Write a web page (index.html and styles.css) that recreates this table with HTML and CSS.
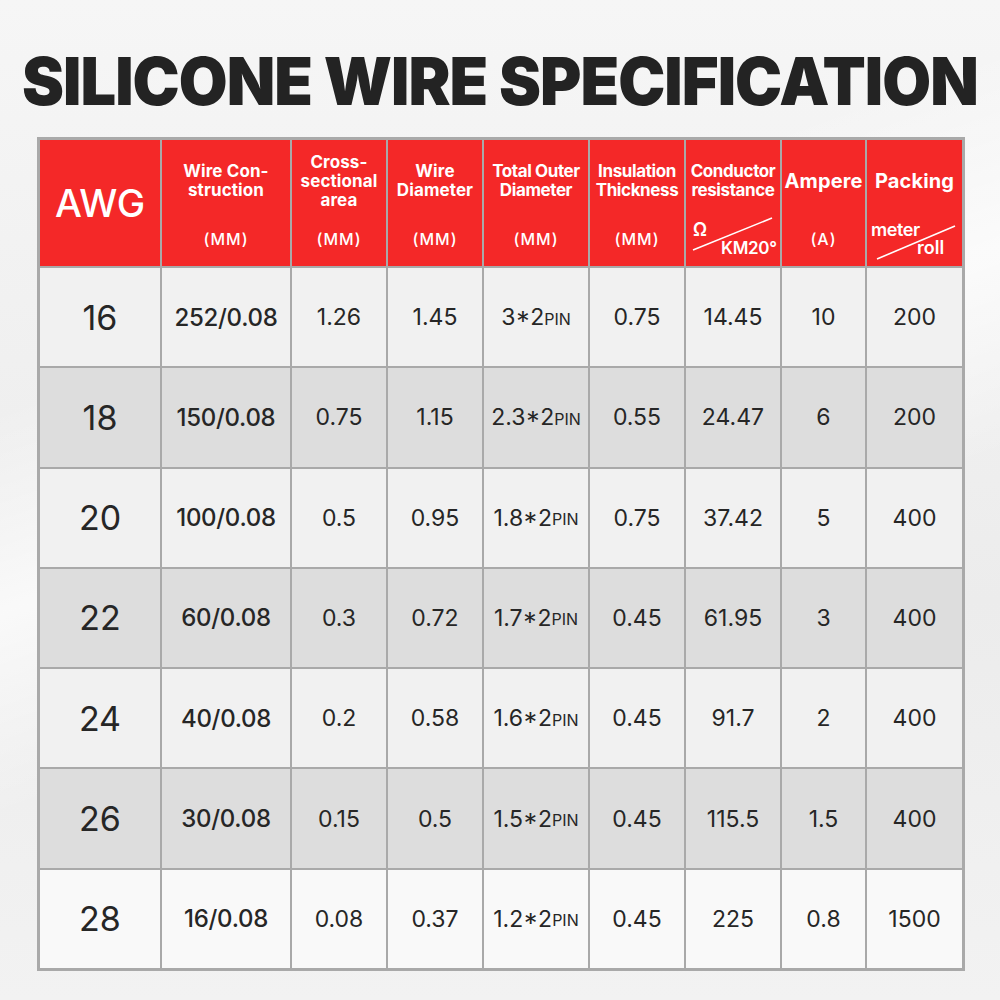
FILE: index.html
```html
<!DOCTYPE html>
<html>
<head>
<meta charset="utf-8">
<link rel="stylesheet" href="styles.css">
</head>
<body>
<div class="page">
  <h1 class="title"><span class="title-text">SILICONE WIRE SPECIFICATION</span></h1>
  <div class="table">
    <div class="row head">
      <div class="hc awg">AWG</div>
      <div class="hc"><div class="ht">Wire Con-<br>struction</div><div class="hu">(MM)</div></div>
      <div class="hc"><div class="ht">Cross-<br>sectional<br>area</div><div class="hu">(MM)</div></div>
      <div class="hc"><div class="ht">Wire<br>Diameter</div><div class="hu">(MM)</div></div>
      <div class="hc"><div class="ht tight">Total Outer<br>Diameter</div><div class="hu">(MM)</div></div>
      <div class="hc"><div class="ht tight">Insulation<br>Thickness</div><div class="hu">(MM)</div></div>
      <div class="hc frac-cell"><div class="ht tight">Conductor<br>resistance</div>
        <svg class="slash" width="94" height="126"><line x1="7" y1="110" x2="86" y2="78" stroke="#fff" stroke-width="1.6"/></svg>
        <span class="fr ohm">Ω</span><span class="fr km">KM20°</span>
      </div>
      <div class="hc"><div class="ht big">Ampere</div><div class="hu">(A)</div></div>
      <div class="hc frac-cell"><div class="ht big">Packing</div>
        <svg class="slash" width="95" height="126"><line x1="10" y1="119" x2="88" y2="86" stroke="#fff" stroke-width="1.6"/></svg>
        <span class="fr meter">meter</span><span class="fr roll">roll</span>
      </div>
    </div>

    <div class="row">
      <div class="c awgv">16</div><div class="c cons">252/0.08</div><div class="c">1.26</div><div class="c">1.45</div><div class="c">3*2<small>PIN</small></div><div class="c">0.75</div><div class="c">14.45</div><div class="c">10</div><div class="c">200</div>
    </div>
    <div class="row alt">
      <div class="c awgv">18</div><div class="c cons">150/0.08</div><div class="c">0.75</div><div class="c">1.15</div><div class="c">2.3*2<small>PIN</small></div><div class="c">0.55</div><div class="c">24.47</div><div class="c">6</div><div class="c">200</div>
    </div>
    <div class="row">
      <div class="c awgv">20</div><div class="c cons">100/0.08</div><div class="c">0.5</div><div class="c">0.95</div><div class="c">1.8*2<small>PIN</small></div><div class="c">0.75</div><div class="c">37.42</div><div class="c">5</div><div class="c">400</div>
    </div>
    <div class="row alt">
      <div class="c awgv">22</div><div class="c cons">60/0.08</div><div class="c">0.3</div><div class="c">0.72</div><div class="c">1.7*2<small>PIN</small></div><div class="c">0.45</div><div class="c">61.95</div><div class="c">3</div><div class="c">400</div>
    </div>
    <div class="row">
      <div class="c awgv">24</div><div class="c cons">40/0.08</div><div class="c">0.2</div><div class="c">0.58</div><div class="c">1.6*2<small>PIN</small></div><div class="c">0.45</div><div class="c">91.7</div><div class="c">2</div><div class="c">400</div>
    </div>
    <div class="row alt">
      <div class="c awgv">26</div><div class="c cons">30/0.08</div><div class="c">0.15</div><div class="c">0.5</div><div class="c">1.5*2<small>PIN</small></div><div class="c">0.45</div><div class="c">115.5</div><div class="c">1.5</div><div class="c">400</div>
    </div>
    <div class="row last">
      <div class="c awgv">28</div><div class="c cons">16/0.08</div><div class="c">0.08</div><div class="c">0.37</div><div class="c">1.2*2<small>PIN</small></div><div class="c">0.45</div><div class="c">225</div><div class="c">0.8</div><div class="c">1500</div>
    </div>
  </div>
</div>
</body>
</html>
```

FILE: styles.css
```css
* { box-sizing: border-box; }
html, body { margin: 0; padding: 0; }
body {
  width: 1000px;
  height: 1000px;
  overflow: hidden;
  background:
    linear-gradient(160deg, rgba(255,255,255,0) 30%, rgba(255,255,255,0.7) 45%, rgba(255,255,255,0) 60%),
    linear-gradient(180deg, #f6f6f6 0%, #ececec 60%, #f2f2f2 100%);
  font-family: "Inter", "Noto Sans", sans-serif;
}
.page { width: 1000px; height: 1000px; }
.title {
  margin: 0;
  height: 137px;
  padding-top: 41px;
  text-align: center;
  font-family: "Inter", sans-serif;
  font-weight: 900;
  font-size: 66px;
  line-height: 80px;
  color: #232323;
  white-space: nowrap;
}
.title-text {
  display: inline-block;
  letter-spacing: -1px;
  transform: scaleX(0.956);
  transform-origin: center;
}
.table {
  margin-left: 37px;
  width: 928px;
  height: 834px;
  border: 3px solid #a9a9a9;
  background: #a9a9a9;
  display: grid;
  grid-template-columns: 120px 128px 94px 94px 104px 94px 94px 83px 95px;
  grid-template-rows: 126px repeat(7, 1fr);
  gap: 2px;
}
.row { display: contents; }
.hc {
  position: relative;
  background: #f42828;
  color: #fff;
  display: flex;
  flex-direction: column;
  align-items: center;
  text-align: center;
}
.hc.awg {
  justify-content: center;
  font-size: 38px;
  font-weight: 500;
  letter-spacing: -0.3px;
}
.ht {
  height: 82px;
  display: flex;
  align-items: center;
  justify-content: center;
  font-size: 17px;
  font-weight: 700;
  line-height: 19px;
  letter-spacing: 0.1px;
  white-space: nowrap;
}
.ht.tight { letter-spacing: -0.4px; font-size: 17px; }
.ht.big { font-size: 20px; line-height: 22px; }
.hu {
  flex: 1;
  display: flex;
  align-items: center;
  justify-content: center;
  padding-bottom: 10px;
  font-size: 16px;
  font-weight: 500;
  letter-spacing: 1px;
}
.slash { position: absolute; left: 0; top: 0; }
.fr {
  position: absolute;
  font-size: 17px;
  font-weight: 600;
  line-height: 18px;
}
.ohm { left: 7px; top: 81px; font-size: 18px; }
.km { left: 35px; top: 99px; letter-spacing: -0.3px; }
.meter { left: 4px; top: 81px; font-size: 18px; letter-spacing: -0.4px; }
.roll { left: 50px; top: 99px; font-size: 18px; }

.c {
  background: #f1f1f1;
  display: flex;
  align-items: center;
  justify-content: center;
  font-size: 23px;
  font-weight: 400;
  color: #262626;
  white-space: nowrap;
}
.row.alt .c { background: #dddddd; }
.row.last .c { background: #f9f9f9; }
.c.awgv { font-size: 34px; }
.c.cons { font-size: 24px; font-weight: 500; letter-spacing: -0.3px; }
.c small { font-size: 16px; padding-top: 3px; }
```
